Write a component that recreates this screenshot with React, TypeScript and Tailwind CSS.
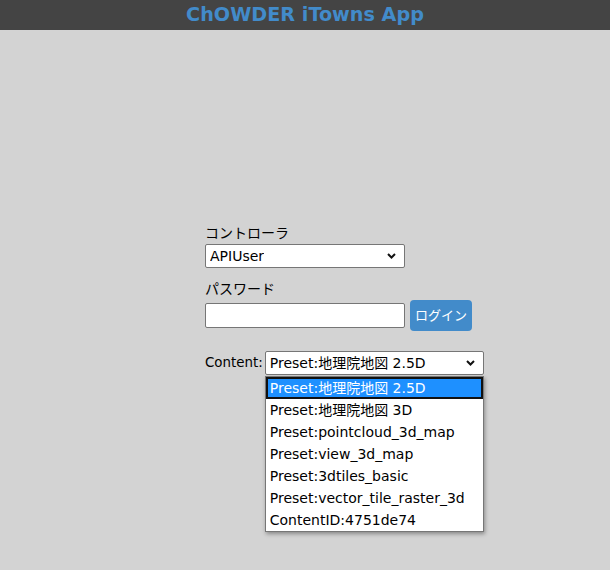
import React from "react";

const OPTIONS = [
  "Preset:地理院地図 2.5D",
  "Preset:地理院地図 3D",
  "Preset:pointcloud_3d_map",
  "Preset:view_3d_map",
  "Preset:3dtiles_basic",
  "Preset:vector_tile_raster_3d",
  "ContentID:4751de74",
];

const FONT = { fontFamily: '"DejaVu Sans", "Noto Sans CJK JP", sans-serif' };

function Chevron() {
  return (
    <svg width="9" height="6" viewBox="0 0 9 6" className="shrink-0">
      <path d="M1 1l3.5 3.5L8 1" fill="none" stroke="#111" strokeWidth="2" />
    </svg>
  );
}

function FakeSelect({ value, className }: { value: string; className: string }) {
  return (
    <div
      className={`flex items-center justify-between bg-white border border-[#767676] rounded-[2px] pl-[4px] pr-[8px] text-[14px] text-black ${className}`}
    >
      <span className="truncate">{value}</span>
      <Chevron />
    </div>
  );
}

export default function App() {
  return (
    <div className="min-h-[570px] bg-[#d3d3d3] text-[14px] text-black" style={FONT}>
      {/* header */}
      <div className="h-[30px] bg-[#444444] flex items-center justify-center">
        <h1 className="text-[19.2px] font-bold text-[#428bca] leading-none">ChOWDER iTowns App</h1>
      </div>

      <div className="w-[200px] mx-auto pt-[193px]">
        <div className="leading-[20px]">コントローラ</div>
        <FakeSelect value="APIUser" className="w-[200px] h-[24px] mt-[1px]" />

        <div className="leading-[20px] mt-[11px]">パスワード</div>
        <div className="flex items-center gap-[5px] w-[300px] mt-[1px]">
          <div className="w-[200px] h-[25px] bg-white border border-[#767676] rounded-[2px] shrink-0" />
          <button className="h-[31px] w-[62px] bg-[#428bca] text-white rounded-[4px] text-[13px]">
            ログイン
          </button>
        </div>

        <div className="flex items-center mt-[20px] w-[300px]">
          <span className="text-[13.4px]">Content:</span>
          <div className="relative ml-[2px]">
            <FakeSelect value={OPTIONS[0]} className="w-[219px] h-[24px]" />
            <div className="absolute left-0 top-[25px] w-[219px] bg-white border border-[#767676] shadow-[1px_2px_4px_rgba(0,0,0,0.35)] text-[14px]">
              {OPTIONS.map((o, i) => (
                <div
                  key={o}
                  className={
                    i === 0
                      ? "h-[22px] leading-[18px] px-[2px] bg-[#1e90ff] text-white border-2 border-[#111]"
                      : "h-[22px] leading-[22px] px-[4px]"
                  }
                >
                  {o}
                </div>
              ))}
            </div>
          </div>
        </div>
      </div>
    </div>
  );
}
